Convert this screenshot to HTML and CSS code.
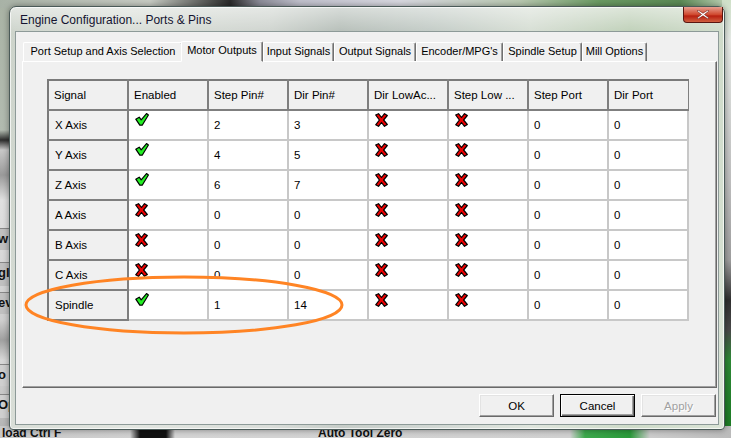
FILE: index.html
```html
<!DOCTYPE html>
<html lang="en">
<head>
    <meta charset="UTF-8">
    <title>Engine Configuration... Ports &amp; Pins</title>
    <link rel="stylesheet" href="styles.css">
</head>
<body>
    <!-- blurred mach3 screen behind the dialog -->
    <div class="desk">
        <div class="bg-left"></div>
        <div class="bg-left-btn b1">w</div>
        <div class="bg-left-btn b2">gl</div>
        <div class="bg-left-btn b3">ev</div>
        <div class="bg-left-btn b4">o</div>
        <div class="bg-left-btn b5">Op</div>
        <div class="bg-top"></div>
        <div class="bg-right"></div>
        <div class="bg-bottom">
            <span class="load">load Ctrl F</span>
            <span class="auto">Auto Tool Zero</span>
        </div>
    </div>

    <div class="window">
        <div class="titlebar">
            <span class="title">Engine Configuration... Ports &amp; Pins</span>
            <div class="close-btn">
                <svg width="12" height="9" viewBox="0 0 12 9">
                    <path d="M1 0 L6 3.2 L11 0 L12 1 L7.5 4.5 L12 8 L11 9 L6 5.8 L1 9 L0 8 L4.5 4.5 L0 1 Z" fill="#fff" stroke="#6a1a10" stroke-width="0.6"/>
                </svg>
            </div>
        </div>

        <div class="client">
            <div class="tabs">
                <div class="tab" style="width:160px">Port Setup and Axis Selection</div>
                <div class="tab active" style="width:82px">Motor Outputs</div>
                <div class="tab" style="width:71px">Input Signals</div>
                <div class="tab" style="width:82px">Output Signals</div>
                <div class="tab" style="width:87px">Encoder/MPG's</div>
                <div class="tab" style="width:79px">Spindle Setup</div>
                <div class="tab" style="width:65px">Mill Options</div>
            </div>

            <div class="panel">
                <table class="grid">
                    <thead>
                        <tr>
                            <th>Signal</th>
                            <th>Enabled</th>
                            <th>Step Pin#</th>
                            <th>Dir Pin#</th>
                            <th>Dir LowAc...</th>
                            <th>Step Low ...</th>
                            <th>Step Port</th>
                            <th>Dir Port</th>
                        </tr>
                    </thead>
                    <tbody id="rows"></tbody>
                </table>
            </div>

            <div class="footer">
                <button class="wbtn">OK</button>
                <button class="wbtn default">Cancel</button>
                <button class="wbtn disabled">Apply</button>
            </div>
        </div>
    </div>

    <svg class="ring" width="340" height="70" viewBox="0 0 340 70">
        <ellipse cx="170" cy="35" rx="158" ry="28" fill="none" stroke="#ff8424" stroke-width="3"/>
    </svg>

    <script>
        const yes = '<svg width="14" height="13" viewBox="0 0 14 13"><path d="M0.8 6.2 L4.2 4.2 L6.2 6.8 L11.5 0.6 L13.4 2 L7.2 12.2 L4.8 12.2 Z" fill="#22ee22" stroke="#000" stroke-width="1.2" stroke-linejoin="round"/></svg>';
        const no = '<svg width="13" height="14" viewBox="0 0 13 14"><path d="M0.7 2 L3.5 0.7 L6.5 4.5 L9.5 0.7 L12.3 2.5 L8.6 7 L12.3 11.5 L9.5 13.3 L6.5 9.5 L3.5 13.3 L0.7 11.8 L4.4 7 Z" fill="#ee0000" stroke="#000" stroke-width="1.2" stroke-linejoin="round"/></svg>';

        const data = [
            ["X Axis", 1, 2, 3],
            ["Y Axis", 1, 4, 5],
            ["Z Axis", 1, 6, 7],
            ["A Axis", 0, 0, 0],
            ["B Axis", 0, 0, 0],
            ["C Axis", 0, 0, 0],
            ["Spindle", 1, 1, 14]
        ];

        let html = "";
        data.forEach(r => {
            html += "<tr>";
            html += "<td class='rowhead'>" + r[0] + "</td>";
            html += "<td class='ico'>" + (r[1] ? yes : no) + "</td>";
            html += "<td>" + r[2] + "</td>";
            html += "<td>" + r[3] + "</td>";
            html += "<td class='ico'>" + no + "</td>";
            html += "<td class='ico'>" + no + "</td>";
            html += "<td>0</td><td>0</td>";
            html += "</tr>";
        });
        document.getElementById("rows").innerHTML = html;
    </script>
</body>
</html>
```

FILE: styles.css
```css
* {
    margin: 0;
    padding: 0;
    box-sizing: border-box;
}
body {
    width: 731px;
    height: 438px;
    overflow: hidden;
    position: relative;
    background: #b9c0b6;
    font-family: "Liberation Sans", Arial, sans-serif;
    font-size: 11px;
    color: #000;
}

/* backdrop */
.desk div, .desk span {
    position: absolute;
}
.bg-left {
    left: 0;
    top: 0;
    width: 12px;
    height: 438px;
    background: linear-gradient(#a9b3a5 0, #b2bbb0 130px, #2c2c2c 140px, #c8c8c8 150px, #9a9a9a 175px, #e0e0e0 200px, #cfcfcf 320px, #a0a0a0 340px, #d8d8d8 360px, #b0b0b0 438px);
}
.bg-left-btn {
    left: -2px;
    width: 40px;
    background: #c0c0c0;
    border-top: 1px solid #888;
    font-weight: bold;
    font-size: 13px;
    white-space: nowrap;
    color: #111;
    line-height: 20px;
}
.b1 { top: 228px; height: 22px; }
.b2 { top: 262px; height: 24px; }
.b3 { top: 292px; height: 22px; }
.b4 { top: 364px; height: 22px; background: #cfcfcf; }
.b5 { top: 394px; height: 24px; background: #cfcfcf; }
.bg-top {
    left: 0;
    top: 0;
    width: 731px;
    height: 8px;
    background: linear-gradient(90deg, #a8b2a6 0, #c8ccc4 150px, #2a2a2a 230px, #8c8c98 260px, #c0c0cc 300px, #d8d8e0 400px, #b8c8b0 520px, #6a9a62 600px, #5b8a55 680px, #c8d8c0 731px);
}
.bg-right {
    left: 722px;
    top: 0;
    width: 9px;
    height: 438px;
    background: linear-gradient(#cfe0c8 0, #e8ece8 40px, #c0c0c0 180px, #a0a0a0 260px, #303030 300px, #4a4a4a 330px, #2e8a36 360px, #1a7a22 438px);
}
.bg-bottom {
    left: 0;
    top: 426px;
    width: 731px;
    height: 12px;
    background: linear-gradient(90deg, #c8c8c8 0, #d0d0d0 130px, #111 140px, #111 166px, #d4d4d4 175px, #d0d0d0 570px, #3ca84c 585px, #2a9a3a 630px, #ccc 650px, #bbb 731px);
}
.bg-bottom span {
    top: 1px;
    font-weight: bold;
    font-size: 12px;
    line-height: 13px;
    color: #111;
}
.load { left: 2px; }
.auto { left: 318px; }

/* dialog window */
.window {
    position: absolute;
    left: 9px;
    top: 6px;
    width: 716px;
    height: 424px;
    border: 1px solid #4a5a58;
    border-radius: 7px 7px 4px 4px;
    background:
        linear-gradient(180deg, rgba(255, 255, 255, 0.55), rgba(255, 255, 255, 0.15) 26px, rgba(255, 255, 255, 0.35)),
        linear-gradient(90deg, #c4ccc2 0, #d2d8d0 120px, #c6ccc6 260px, #a9b3ac 330px, #b8c2bc 420px, #cfd8cc 520px, #b4c8ac 620px, #c8d6c2 716px);
    box-shadow: inset 0 0 0 1px rgba(255, 255, 255, 0.7), 0 0 6px rgba(0, 0, 0, 0.4);
    padding: 0 5px 4px 5px;
}
.titlebar {
    height: 24px;
    display: flex;
    justify-content: space-between;
    align-items: flex-start;
    padding-left: 5px;
}
.title {
    margin-top: 6px;
    font-family: "Liberation Sans", Arial, sans-serif;
    font-size: 12px;
    color: #141430;
}
.close-btn {
    width: 40px;
    height: 16px;
    margin-right: -4px;
    border: 1px solid #5a1610;
    border-top: none;
    border-radius: 0 0 4px 4px;
    background: linear-gradient(#e8a090, #d04a30 50%, #b82010 60%, #d06040);
    display: flex;
    align-items: center;
    justify-content: center;
}

.client {
    height: 394px;
    background: #f0f0f0;
    border: 1px solid #8d9a98;
    display: flex;
    flex-direction: column;
    padding: 8px 1px 0 6px;
}

/* tabs */
.tabs {
    display: flex;
    height: 21px;
    padding-left: 1px;
    align-items: flex-end;
    position: relative;
    z-index: 2;
}
.tab {
    height: 19px;
    border-top: 1px solid #fff;
    border-left: 1px solid #fff;
    border-right: 1px solid #707070;
    box-shadow: inset -1px 0 #a0a0a0;
    border-radius: 2px 2px 0 0;
    text-align: center;
    line-height: 17px;
    white-space: nowrap;
    overflow: hidden;
    font-size: 11px;
    background: #f0f0f0;
}
.tab.active {
    height: 21px;
    margin: 0 -2px;
    line-height: 17px;
    position: relative;
    z-index: 3;
    border-bottom: 1px solid #f0f0f0;
    margin-bottom: -1px;
}
.tab.active + .tab {
    margin-left: 2px;
}

.panel {
    width: 695px;
    height: 327px;
    border-top: 1px solid #fff;
    border-left: 1px solid #fff;
    border-right: 1px solid #696969;
    border-bottom: 1px solid #696969;
    box-shadow: inset -1px -1px #a0a0a0;
    padding: 17px 0 0 24px;
}

/* grid */
.grid {
    border-collapse: collapse;
    table-layout: fixed;
    width: 641px;
    border-top: 2px solid #7a7a7a;
    border-left: 2px solid #7a7a7a;
}
.grid th, .grid td {
    width: 80px;
    height: 30px;
    text-align: left;
    font-weight: normal;
    padding: 0 5px;
    white-space: nowrap;
    overflow: hidden;
    vertical-align: middle;
    font-size: 11.5px;
}
.grid th {
    background: #f0f0f0;
    border-right: 2px solid #7f7f7f;
    border-bottom: 2px solid #7f7f7f;
}
.grid th:last-child {
    border-right: 1px solid #7f7f7f;
}
.grid td {
    background: #fff;
    border-right: 2px solid #c8c8c8;
    border-bottom: 2px solid #c8c8c8;
}
.grid td.rowhead {
    background: #f0f0f0;
    border-right: 2px solid #7f7f7f;
    border-bottom: 2px solid #7f7f7f;
    padding-left: 6px;
}
.grid td.ico {
    vertical-align: top;
    padding: 2px 6px 0;
}
.grid td.ico svg {
    display: block;
}

/* buttons */
.footer {
    display: flex;
    justify-content: flex-end;
    gap: 6px;
    margin-top: 6px;
    padding-right: 1px;
}
.wbtn {
    width: 75px;
    height: 23px;
    font-family: "Liberation Sans", Arial, sans-serif;
    font-size: 11.5px;
    background: #f0f0f0;
    border: 1px solid;
    border-color: #fff #696969 #696969 #fff;
    box-shadow: inset -1px -1px #a0a0a0, inset 1px 1px #e3e3e3;
    color: #000;
}
.wbtn.default {
    border: 1px solid #000;
    box-shadow: inset 1px 1px #fff, inset -1px -1px #696969, inset -2px -2px #a0a0a0;
}
.wbtn.disabled {
    color: #a0a0a0;
    text-shadow: 1px 1px #fff;
}

.ring {
    position: absolute;
    left: 14px;
    top: 270px;
}
```
